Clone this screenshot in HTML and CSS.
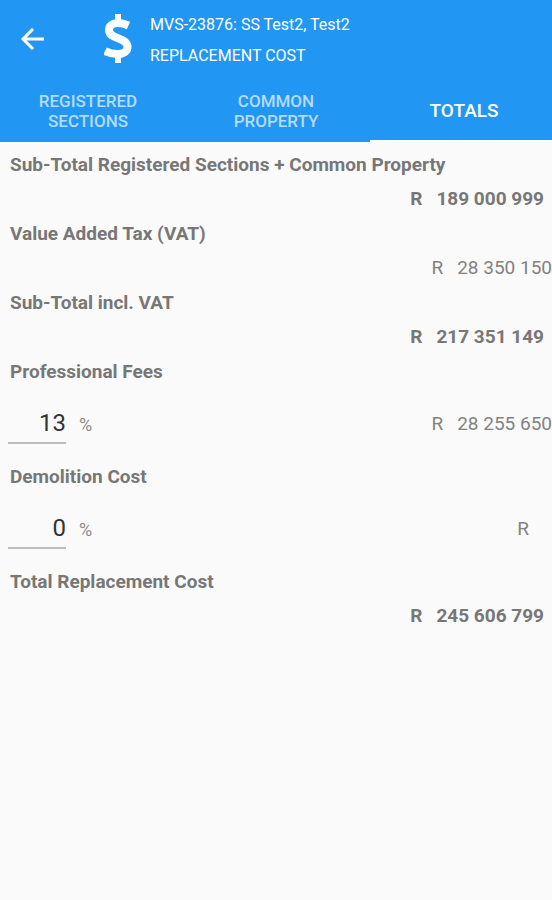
FILE: index.html
```html
<!DOCTYPE html>
<html lang="en">
<head>
<meta charset="utf-8">
<meta name="viewport" content="width=device-width, initial-scale=1">
<title>Replacement Cost</title>
<link rel="stylesheet" href="styles.css">
</head>
<body>
<header class="app-bar">
  <div class="toolbar">
    <button class="back" type="button" aria-label="Back">
      <svg width="24" height="24" viewBox="0 0 24 24" fill="none" stroke="currentColor" stroke-width="3"><path d="M24 11H3.500M13 1L3 11l10 10"/></svg>
    </button>
    <svg class="dollar" width="28" height="52" viewBox="0 0 28 52" fill="none" stroke="currentColor" aria-hidden="true">
      <path stroke-width="6" d="M14 0v9M14 40v9"/>
      <path stroke-width="8" d="M24.500 11.500C20.500 9.700 17.500 9 14 9 8.500 9 5 11.500 5 16c0 4.500 3.500 6.200 9 8.300 6 2.300 9.500 4.200 9.500 8.700 0 4.500-4 7-10 7-4.500 0-8.500-1-12.500-3"/>
    </svg>
    <h1 class="title">
      <span>MVS-23876: SS Test2, Test2</span>
      <span>REPLACEMENT COST</span>
    </h1>
  </div>
  <nav class="tabs">
    <a class="tab" href="#sections">REGISTERED<br>SECTIONS</a>
    <a class="tab" href="#common">COMMON<br>PROPERTY</a>
    <a class="tab tab-active" href="#totals" aria-current="page">TOTALS</a>
  </nav>
</header>
<main class="totals" id="totals">
  <section>
    <h2 class="label">Sub-Total Registered Sections + Common Property</h2>
    <p class="amount amount-total"><span>R</span><span>189 000 999</span></p>
  </section>
  <section>
    <h2 class="label">Value Added Tax (VAT)</h2>
    <p class="amount"><span>R</span><span>28 350 150</span></p>
  </section>
  <section>
    <h2 class="label">Sub-Total incl. VAT</h2>
    <p class="amount amount-total"><span>R</span><span>217 351 149</span></p>
  </section>
  <section>
    <label class="label" for="fees">Professional Fees</label>
    <div class="entry">
      <input class="percent" id="fees" type="text" inputmode="numeric" value="13">
      <span class="unit">%</span>
      <p class="amount"><span>R</span><span>28 255 650</span></p>
    </div>
  </section>
  <section>
    <label class="label" for="demolition">Demolition Cost</label>
    <div class="entry">
      <input class="percent" id="demolition" type="text" inputmode="numeric" value="0">
      <span class="unit">%</span>
      <p class="amount amount-empty"><span>R</span></p>
    </div>
  </section>
  <section>
    <h2 class="label">Total Replacement Cost</h2>
    <p class="amount amount-total"><span>R</span><span>245 606 799</span></p>
  </section>
</main>
</body>
</html>
```
FILE: styles.css
```css
* {
  box-sizing: border-box;
}

body {
  margin: 0;
  min-height: 100vh;
  overflow-x: hidden;
  background: #fafafa;
  color: #777;
  font-family: Roboto, sans-serif;
  font-size: 19px;
}

.app-bar {
  overflow: hidden;
  background: #2196f3;
  color: #fff;
}

.toolbar {
  display: flex;
  align-items: center;
  height: 80px;
  padding-left: 20px;
}

.back {
  display: flex;
  padding: 0;
  border: 0;
  background: none;
  color: inherit;
}

.dollar {
  margin: 0 18px 0 60px;
}

.title {
  margin: 0;
  font-size: 16px;
  font-weight: 400;
  line-height: 31px;
}

.title span {
  display: block;
}

.tabs {
  display: grid;
  grid-template-columns: repeat(3, 1fr);
  height: 62px;
  margin: 0 -6px;
}

.tab {
  display: flex;
  align-items: center;
  justify-content: center;
  padding-top: 2px;
  border-bottom: 2px solid transparent;
  color: #b5dcfb;
  font-size: 17px;
  font-weight: 500;
  line-height: 20px;
  text-align: center;
  text-decoration: none;
}

.tab-active {
  border-color: #fff;
  color: #fff;
  font-size: 19px;
}

.totals {
  padding-top: 5px;
}

.label {
  display: block;
  margin: 0;
  padding-left: 10px;
  font-size: 19px;
  font-weight: 700;
  line-height: 35px;
}

.amount {
  display: flex;
  justify-content: flex-end;
  gap: 14px;
  margin: 0;
  color: #828282;
  line-height: 34px;
}

.amount-total {
  padding-right: 8px;
  color: #777;
  font-weight: 700;
}

.amount-empty {
  padding-right: 23px;
}

.entry {
  display: flex;
  align-items: center;
  height: 70px;
  padding-left: 8px;
}

.percent {
  width: 58px;
  height: 40px;
  padding: 0;
  border: 0;
  border-bottom: 2px solid #bdbdbd;
  border-radius: 0;
  background: none;
  color: #333;
  font: 24px Roboto, sans-serif;
  text-align: right;
}

.unit {
  margin-left: 13px;
  color: #8a8a8a;
  font-size: 18px;
}

.entry .amount {
  margin-left: auto;
}
```
